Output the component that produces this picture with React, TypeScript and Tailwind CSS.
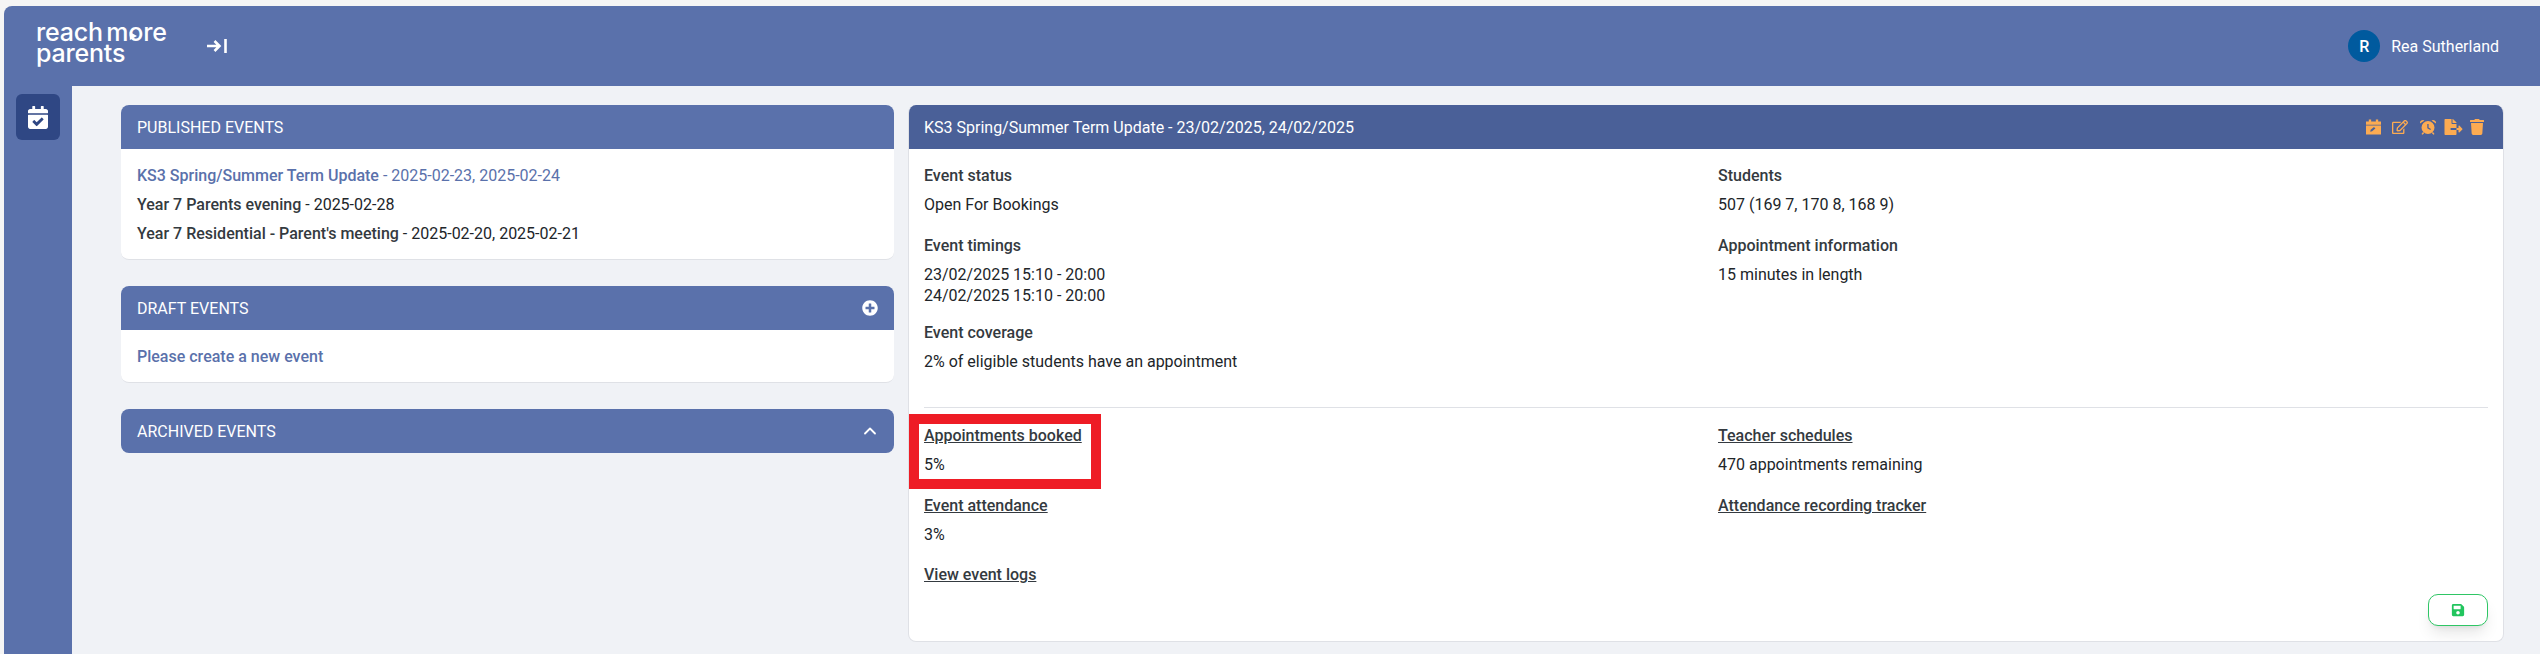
import { ChevronUp } from 'lucide-react';
import { FaCalendarCheck, FaFileExport, FaPlusCircle, FaRegEdit, FaSave, FaTrash } from 'react-icons/fa';

function CalendarPen({ className }: { className?: string }) {
  return (
    <svg viewBox="0 0 16 16" className={className} fill="currentColor">
      <path d="M3 0h2.500v2h5V0H13v2h3v3.500H0V2h3zM0 6.500h16V16H0z" />
      <path d="M4.500 13l.5-2 3.500-3 1.500 1.500-3.500 3z" fill="#4a6098" />
    </svg>
  );
}

function AlarmClock({ className }: { className?: string }) {
  return (
    <svg viewBox="0 0 16 16" className={className} fill="currentColor">
      <path fillRule="evenodd" d="M8 2a6.500 6.500 0 1 1 0 13A6.500 6.500 0 0 1 8 2zm-.7 3v4.300l3 1.800.7-1.100-2.400-1.400V5z" />
      <path d="M0 4.500a3 3 0 0 1 4.500-3zM16 4.500a3 3 0 0 0-4.500-3zM3 13l-1.500 2 1 .8L4.300 14zM13 13l1.500 2-1 .8L11.700 14z" />
    </svg>
  );
}

function CollapseIcon() {
  return (
    <svg viewBox="0 0 20 14" className="w-[20px] h-[14px]" fill="none" stroke="currentColor" strokeWidth="2.600">
      <path d="M0 7h12.500M7.500 2l5 5-5 5" />
      <path d="M18.500 0v14" />
    </svg>
  );
}

function Logo() {
  return (
    <div className="relative w-[132px] h-[42px] -mt-[6px] text-white font-['Inter',sans-serif] font-medium text-[25px] leading-[21px] tracking-[-0.2px] [word-spacing:-3px] whitespace-nowrap">
      reach more
      <br />
      parents
      <svg viewBox="0 0 10 10" className="absolute left-[93px] top-[10px] w-[8px] h-[8px]" fill="#ffffff">
        <path d="M1 0l9 5-9 5z" />
      </svg>
    </div>
  );
}

function PanelHeader({ title, right }: { title: string; right?: React.ReactNode }) {
  return (
    <div className="h-[44px] bg-[#5a71ab] text-white px-4 flex items-center justify-between">
      <span>{title}</span>
      {right}
    </div>
  );
}

function Info({ label, children, link, className }: { label: string; children?: React.ReactNode; link?: boolean; className?: string }) {
  return (
    <div className={className}>
      <div className={link ? 'font-medium text-[#343a40] underline' : 'font-medium text-[#343a40]'}>{label}</div>
      {children && <div className="mt-2">{children}</div>}
    </div>
  );
}

export default function App() {
  return (
    <div className="h-[654px] overflow-hidden bg-[#f5f5f5] pt-[6px] pl-[4px] font-['Roboto',sans-serif] text-base leading-[21px] text-[#212529]">
      <div className="relative h-[648px] bg-[#5a71ab] rounded-tl-[8px]">
        {/* top bar */}
        <div className="h-[80px] flex items-center justify-between pl-[32px] pr-[41px] text-white">
          <div className="flex items-center gap-[39px]">
            <Logo />
            <CollapseIcon />
          </div>
          <div className="flex items-center gap-[11px]">
            <div className="w-[32px] h-[32px] rounded-full bg-[#005a9e] flex items-center justify-center font-medium">R</div>
            <span>Rea Sutherland</span>
          </div>
        </div>

        <div className="flex h-[568px]">
          {/* sidebar */}
          <div className="w-[68px] shrink-0 pt-[8px] pl-[12px]">
            <div className="w-[44px] h-[46px] rounded-[6px] bg-[#2f4784] flex items-center justify-center text-white">
              <FaCalendarCheck className="w-[20px] h-[23px]" />
            </div>
          </div>

          {/* content */}
          <div className="flex-1 bg-[#f0f2f6] pt-[19px] pl-[49px] pr-[36px] flex gap-[14px]">
            <div className="w-[773px] shrink-0 flex flex-col gap-[26px]">
              <section className="rounded-[8px] overflow-hidden bg-white border-b border-[#dfe1e6]">
                <PanelHeader title="PUBLISHED EVENTS" />
                <div className="px-4 pt-[16px] h-[110px] flex flex-col gap-2">
                  <div className="text-[#5a71ab]"><span className="font-medium">KS3 Spring/Summer Term Update</span> - 2025-02-23, 2025-02-24</div>
                  <div><span className="font-medium text-[#343a40]">Year 7 Parents evening</span> - 2025-02-28</div>
                  <div><span className="font-medium text-[#343a40]">Year 7 Residential - Parent's meeting</span> - 2025-02-20, 2025-02-21</div>
                </div>
              </section>

              <section className="rounded-[8px] overflow-hidden bg-white border-b border-[#dfe1e6]">
                <PanelHeader title="DRAFT EVENTS" right={<FaPlusCircle className="w-[16px] h-[16px]" />} />
                <div className="px-4 pt-[16px] h-[52px] font-medium text-[#5a71ab]">Please create a new event</div>
              </section>

              <section className="rounded-[8px] overflow-hidden">
                <PanelHeader title="ARCHIVED EVENTS" right={<ChevronUp className="w-[20px] h-[20px] -mr-[2px]" strokeWidth={2.2} />} />
              </section>
            </div>

            <section className="flex-1 h-[537px] rounded-[8px] overflow-hidden bg-white border-b border-x border-[#dfe1e6] flex flex-col">
              <div className="h-[44px] shrink-0 bg-[#4a6098] text-white px-[15px] flex items-center justify-between">
                <span>KS3 Spring/Summer Term Update - 23/02/2025, 24/02/2025</span>
                <div className="flex items-center text-[#fcab52] pr-[4px]">
                  <CalendarPen className="w-[15px] h-[16px]" />
                  <FaRegEdit className="w-[16px] h-[16px] ml-[11px]" />
                  <AlarmClock className="w-[16px] h-[16px] ml-[12px]" />
                  <FaFileExport className="w-[19px] h-[16px] ml-[8px]" />
                  <FaTrash className="w-[14px] h-[16px] ml-[7px]" />
                </div>
              </div>

              <div className="relative flex-1 px-[15px] pt-[16px]">
                <div className="flex h-[243px] border-b border-[#dfe1e6]">
                  <div className="w-[794px] shrink-0">
                    <Info label="Event status" className="mb-[20px]">Open For Bookings</Info>
                    <Info label="Event timings" className="mb-[16px]">
                      23/02/2025 15:10 - 20:00<br />24/02/2025 15:10 - 20:00
                    </Info>
                    <Info label="Event coverage">2% of eligible students have an appointment</Info>
                  </div>
                  <div>
                    <Info label="Students" className="mb-[20px]">507 (169 7, 170 8, 168 9)</Info>
                    <Info label="Appointment information">15 minutes in length</Info>
                  </div>
                </div>

                <div className="flex pt-[17px]">
                  <div className="w-[794px] shrink-0">
                    <Info link label="Appointments booked" className="mb-[20px]">5%</Info>
                    <Info link label="Event attendance" className="mb-[19px]">3%</Info>
                    <Info link label="View event logs" />
                  </div>
                  <div>
                    <Info link label="Teacher schedules" className="mb-[20px]">470 appointments remaining</Info>
                    <Info link label="Attendance recording tracker" />
                  </div>
                </div>

                {/* save button sits over the card corner */}
                <button className="absolute right-[15px] bottom-[15px] w-[60px] h-[32px] rounded-[10px] border border-[#2fc665] bg-white shadow-lg flex items-center justify-center text-[#22c55e]">
                  <FaSave className="w-[14px] h-[14px]" />
                </button>
              </div>
            </section>
          </div>
        </div>

        {/* red annotation box drawn on the screenshot */}
        <div className="absolute left-[905px] top-[408px] w-[192px] h-[75px] border-[10px] border-[#ee1c25]" />
      </div>
    </div>
  );
}
